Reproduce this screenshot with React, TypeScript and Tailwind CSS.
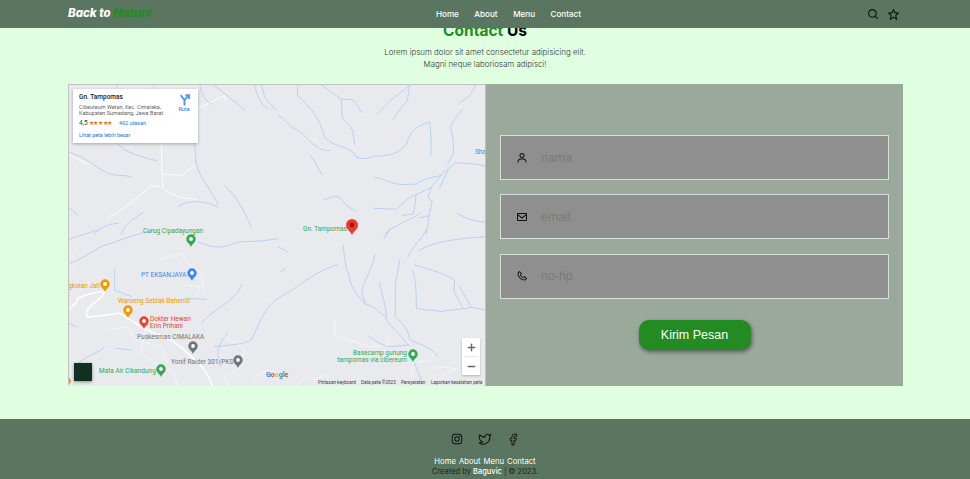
// Contact page with embedded map and message form

import { Plus, Minus, Twitter, Facebook } from 'lucide-react'
import { BiSearch, BiStar, BiUser, BiEnvelope, BiPhone, BiLogoInstagram } from 'react-icons/bi'

const navLinks = ['Home', 'About', 'Menu', 'Contact']

// River and road traces, written in 3x crop coordinates per quadrant
const quadrants = [
  {
    origin: 'translate(0 0) scale(0.3333)',
    thick: 2.5,
    rivers: [
      'M380 180 L385 240 C395 280 430 320 450 360',
      'M470 305 C500 330 530 380 550 430',
      'M560 0 C565 30 575 60 600 75',
      'M580 0 L590 40 L625 80',
      'M395 0 C400 30 410 50 430 60',
      'M440 5 C470 30 500 50 530 80',
      'M330 370 C350 345 420 350 450 370',
      'M0 205 C50 215 80 250 110 262 C130 280 180 270 190 280',
      'M150 180 C170 205 220 220 265 230',
      'M225 385 C190 410 170 420 160 450',
      'M80 450 C100 425 130 420 150 418',
      'M0 368 L30 395',
      'M140 0 L150 12',
      'M250 0 L262 12',
    ],
    roads: [
      'M385 75 L470 35',
      'M280 180 L282 265 L285 310 L250 305 C210 340 150 390 120 400',
      'M285 270 L340 275 L385 240',
      'M285 310 C300 330 340 345 385 345',
      'M0 210 C30 225 50 240 70 240',
      'M470 35 L472 50',
    ],
  },
  {
    origin: 'translate(0 146) scale(0.3333)',
    thick: 4.5,
    rivers: [
      'M0 100 C50 90 80 50 130 40 C180 20 220 10 260 0',
      'M390 35 C430 50 450 60 500 40 C520 30 560 40 630 25',
      'M520 165 C510 210 430 240 400 280',
      'M630 205 C590 230 570 290 550 330 C520 345 480 345 440 350',
      'M480 310 C450 340 440 370 460 410',
      'M140 120 L140 180 L190 200',
      'M0 280 L25 290',
      'M30 400 C70 370 90 370 110 350',
      'M145 355 L190 360',
      'M90 0 C60 10 20 20 0 30',
      'M350 205 L415 208',
    ],
    roads: [
      'M155 250 C190 270 210 290 260 310 C300 320 340 350 370 380 C400 400 420 430 435 470',
      'M110 185 C80 185 50 195 30 205 C25 225 10 230 0 238',
      'M110 185 C105 200 85 215 70 225 C55 240 50 255 60 262 L155 250',
    ],
    thinRoads: [
      'M270 90 L340 70 L360 100 L400 130 L410 190',
      'M350 165 L400 170 L385 190',
      'M230 300 L220 370 L260 400 L320 430 L330 470',
      'M120 300 L180 290 L200 330 L280 350 L300 400',
      'M470 320 L530 360 L510 420 L470 440 L480 470',
      'M560 440 L600 420 L630 440',
      'M5 60 L25 100 L5 130',
    ],
  },
  {
    origin: 'translate(210 0) scale(0.3333)',
    thick: 3,
    rivers: [
      'M60 0 L58 35 C90 60 125 100 140 160 C160 185 200 185 225 205 L240 222',
      'M0 95 C20 100 30 125 50 135 C75 145 85 165 105 180 C125 195 135 200 155 200',
      'M125 0 L190 45 L193 100 C200 115 222 125 225 145 L230 182',
      'M190 45 L222 47 C235 55 245 75 250 85',
      'M395 5 C360 30 330 55 298 90',
      'M395 5 L388 50 C370 70 355 85 347 107',
      'M238 222 C260 226 275 222 290 216 C320 216 360 215 385 180 C395 150 405 130 455 113 L460 165 L458 215',
      'M555 75 C535 100 520 115 518 130 L525 165 L527 210 L510 238',
      'M593 0 C585 30 565 45 545 55',
      'M98 215 C115 235 120 255 133 274',
      'M290 280 C320 285 340 300 375 302 L415 300 C430 290 450 280 490 275',
      'M535 236 C515 250 505 260 495 265 L460 310 C420 330 410 335 395 340 L355 376 L288 373',
      'M535 236 L590 240 L622 246',
      'M510 258 L485 312',
      'M460 310 L450 340 L463 352 L455 385 L445 450',
      'M415 330 C410 360 410 380 405 390 L372 394',
      'M428 385 C425 395 380 410 330 440 L322 450',
      'M426 402 L450 396',
      'M138 347 C155 345 170 330 185 340 C195 355 210 370 235 382',
      'M537 388 C560 400 580 412 622 414',
    ],
    roads: [],
  },
  {
    origin: 'translate(210 146) scale(0.3333)',
    thick: 3,
    rivers: [
      'M195 45 C200 75 200 115 212 130 C215 170 240 200 262 222 C290 230 310 250 325 265 C330 285 365 310 390 345',
      'M290 75 C285 120 250 160 252 190 L262 222',
      'M305 160 C310 190 325 225 325 265',
      'M365 90 C360 130 350 150 352 190 L352 260 C370 280 385 285 395 325 C400 340 450 340 480 380',
      'M403 120 C415 150 415 200 415 235 C430 240 470 240 490 245 C520 238 560 238 580 232 L622 240',
      'M410 105 C440 115 490 125 530 150 L528 185 L555 235',
      'M545 170 C555 190 570 215 580 232',
      'M178 103 C130 120 90 145 50 175 C30 190 10 195 0 205',
      'M0 50 L28 65',
      'M8 125 L22 115',
      'M445 0 C430 30 400 50 390 82',
      'M622 20 C560 25 470 30 423 62',
      'M335 0 L318 25',
      'M272 318 C300 340 320 350 340 350 L395 345',
      'M410 400 L430 450',
    ],
    roads: [],
    thinRoads: [
      'M168 262 L172 318 C200 325 230 335 270 350 L330 345 L330 315',
      'M405 400 L400 450',
      'M460 420 C470 400 530 420 535 415 L490 440 L510 465',
      'M55 465 L85 440 L115 450 L145 430 L150 455',
      'M420 395 L455 395 L470 365',
    ],
  },
]

function Pin({ x, y, color, dot = 'white', large = false }: { x: number; y: number; color: string; dot?: string; large?: boolean }) {
  // Map marker, tip pointing down, centred on the head
  const r = large ? 6 : 4.7
  return (
    <g transform={`translate(${x} ${y})`}>
      <path
        d={`M${-r} 0 A${r} ${r} 0 1 1 ${r} 0 C${r} ${r * 0.8} ${r * 0.3} ${r * 0.9} 0 ${r * 1.7} C${-r * 0.3} ${r * 0.9} ${-r} ${r * 0.8} ${-r} 0 Z`}
        fill={color}
      />
      <circle r={r * 0.4} fill={dot} />
    </g>
  )
}

function MapLabel({ x, y, fill, anchor, children }: { x: number; y: number; fill: string; anchor?: 'end'; children: string }) {
  return (
    <text x={x} y={y} fill={fill} fontSize="6.5" fontFamily="Roboto, sans-serif" textAnchor={anchor}>
      {children}
    </text>
  )
}

function MapEmbed() {
  return (
    <div className="relative h-[302px] w-[418px] shrink-0 overflow-hidden border-t border-r border-l border-[#bfc3c0] bg-[#e8eaed] font-['Roboto',sans-serif]">
      <svg viewBox="0 0 417 302" className="absolute -top-px -left-px h-[302px] w-[417px]" fill="none" strokeLinecap="round" strokeLinejoin="round">
        {quadrants.map((q) => (
          <g key={q.origin} transform={q.origin}>
            {q.thinRoads?.map((d) => <path key={d} d={d} stroke="#ffffff" strokeWidth="1.6" />)}
            {q.roads.map((d) => <path key={d} d={d} stroke="#ffffff" strokeWidth={q.thick} />)}
            {q.rivers.map((d) => <path key={d} d={d} stroke="#b7d1f5" strokeWidth="3" />)}
          </g>
        ))}

        <MapLabel x={75} y={149} fill="#34a853">Curug Cipadayungan</MapLabel>
        <MapLabel x={73} y={193} fill="#4285f4">PT EKSANJAYA</MapLabel>
        <MapLabel x={32} y={204} fill="#f29900" anchor="end">gkolan Jati</MapLabel>
        <MapLabel x={50} y={219} fill="#f29900">Waroeng Seblak Bahenol</MapLabel>
        <MapLabel x={82} y={237} fill="#ea4335">Dokter Hewan</MapLabel>
        <MapLabel x={82} y={244} fill="#ea4335">Erin Prihani</MapLabel>
        <MapLabel x={69} y={255} fill="#70757a">Puskesmas CIMALAKA</MapLabel>
        <MapLabel x={103} y={280} fill="#70757a">Yonif Raider 301/PKS</MapLabel>
        <MapLabel x={31} y={289} fill="#34a853">Mata Air Cikandung</MapLabel>
        <MapLabel x={235} y={147} fill="#34a853">Gn. Tampomas</MapLabel>
        <MapLabel x={407} y={70} fill="#4285f4">Sha</MapLabel>
        <MapLabel x={339} y={271} fill="#34a853" anchor="end">Basecamp gunung</MapLabel>
        <MapLabel x={339} y={278} fill="#34a853" anchor="end">tampomas via cibereum</MapLabel>

        <Pin x={123} y={155} color="#34a853" />
        <Pin x={124} y={189} color="#4285f4" />
        <Pin x={37} y={200} color="#f29900" />
        <Pin x={60} y={226} color="#f29900" />
        <Pin x={76} y={237} color="#ea4335" />
        <Pin x={125} y={262} color="#70757a" />
        <Pin x={170} y={276} color="#70757a" />
        <Pin x={93} y={285} color="#34a853" />
        <Pin x={345} y={270} color="#34a853" />
        <Pin x={284} y={141} color="#ea3b2e" dot="#a31515" large />
        <circle cx={0} cy={297} r={3} fill="#f29900" />

        <text x={198} y={293} fontSize="7" fontWeight="700" fontFamily="Roboto, sans-serif">
          <tspan fill="#4285f4">G</tspan>
          <tspan fill="#ea4335">o</tspan>
          <tspan fill="#fbbc04">o</tspan>
          <tspan fill="#4285f4">g</tspan>
          <tspan fill="#34a853">l</tspan>
          <tspan fill="#ea4335">e</tspan>
        </text>

        <g fontSize="4.6" fill="#3c4043" fontFamily="Roboto, sans-serif">
          <text x={250} y={299.5}>Pintasan keyboard</text>
          <text x={293} y={299.5}>Data peta ©2023</text>
          <text x={333} y={299.5}>Persyaratan</text>
          <text x={363} y={299.5}>Laporkan kesalahan peta</text>
        </g>
      </svg>

      {/* Place card */}
      <div className="absolute top-[4px] left-[4px] h-[54px] w-[125px] bg-white px-[6px] pt-[4px] shadow-[0_1px_3px_rgba(0,0,0,0.3)]">
        <p className="text-[6.5px] leading-[9px] font-medium text-[#202124]">Gn. Tampomas</p>
        <p className="mt-[1.5px] text-[5.5px] leading-[6.6px] text-[#5f6368]">
          Cibeureum Wetan, Kec. Cimalaka,
          <br />
          Kabupaten Sumedang, Jawa Barat
        </p>
        <div className="mt-[2px] flex items-center text-[6.5px] leading-[9px] text-[#3c4043]">
          <span>4,5</span>
          <span className="ml-[1px] text-[5.5px] tracking-[-0.3px] text-[#e7711b]">★★★★★</span>
          <span className="ml-[7px] text-[5.5px] text-[#1a73e8]">462 ulasan</span>
        </div>
        <p className="mt-[4px] text-[5.4px] leading-[7px] text-[#1a73e8]">Lihat peta lebih besar</p>
        <div className="absolute top-[4px] right-[7px] flex w-[14px] flex-col items-center">
          <svg viewBox="0 0 24 24" className="h-[13px] w-[13px]" fill="none" stroke="#5e97ea" strokeWidth="3.6">
            <path d="M12 23 V13 L5 4" />
            <path d="M12 13 L19 5" />
            <path d="M13.5 4 H20.5 V11" />
          </svg>
          <span className="text-[5.5px] leading-[7px] text-[#1a73e8]">Rute</span>
        </div>
      </div>

      {/* Satellite thumbnail */}
      <div className="absolute top-[278px] left-[5px] h-[18px] w-[18px] bg-[#12301f] shadow-[0_1px_3px_rgba(0,0,0,0.4)]" />

      {/* Zoom control */}
      <div className="absolute top-[253px] left-[393px] flex h-[37px] w-[18px] flex-col items-center bg-white shadow-[0_1px_2px_rgba(0,0,0,0.25)]">
        <div className="flex h-[18px] items-center">
          <Plus className="h-[11px] w-[11px] text-[#666666]" strokeWidth={3} />
        </div>
        <div className="h-px w-[14px] bg-[#e6e6e6]" />
        <div className="flex h-[18px] items-center">
          <Minus className="h-[11px] w-[11px] text-[#666666]" strokeWidth={3} />
        </div>
      </div>
    </div>
  )
}

function Field({ icon, placeholder }: { icon: React.ReactNode; placeholder: string }) {
  return (
    <div className="flex h-[45px] w-full items-center border border-[#d9e0da] bg-[#8f8f8f] pl-[15px]">
      <span className="flex w-[25px] shrink-0 text-[12px] text-[#111111]">{icon}</span>
      <input
        placeholder={placeholder}
        className="w-full bg-transparent pt-[1px] font-['Liberation_Sans',sans-serif] text-[12.4px] outline-none placeholder:text-[#7a7a7a]"
      />
    </div>
  )
}

export default function App() {
  return (
    <div className="relative h-[479px] w-[970px] overflow-hidden bg-[#e0ffe0] font-['Inter',sans-serif]">
      <nav className="fixed top-0 left-0 z-10 flex h-[28px] w-full items-center bg-[#5a7660] px-[68px]">
        <a className="w-[368px] text-[11.5px] font-extrabold italic text-white">
          Back to <span className="text-[#228b22]">Nature</span>
        </a>
        <div className="flex gap-[15.5px] text-[8.1px] leading-none font-medium text-white">
          {navLinks.map((link) => (
            <a key={link}>{link}</a>
          ))}
        </div>
        <div className="ml-auto mr-[2px] flex items-center gap-[7px] text-[13px] text-[#111111]">
          <BiSearch />
          <BiStar />
        </div>
      </nav>

      <main className="px-[68px] pt-[21px]">
        <div className="text-center">
          <h1 className="text-[15.5px] leading-[20px] font-bold text-black">
            <span className="text-[#228b22]">Contact</span> Us
          </h1>
          <p className="mt-[5px] text-[7.9px] leading-[12px] font-light text-[#333333]">
            Lorem ipsum dolor sit amet consectetur adipisicing elit.
            <br />
            Magni neque laboriosam adipisci!
          </p>
        </div>

        <section className="mt-[14px] flex w-[835px]">
          <MapEmbed />
          <div className="flex h-[302px] flex-1 flex-col items-center bg-[#9ba89c] px-[14px] pt-[51px]">
            <div className="flex w-full flex-col gap-[14.4px]">
              <Field icon={<BiUser />} placeholder="nama" />
              <Field icon={<BiEnvelope />} placeholder="email" />
              <Field icon={<BiPhone />} placeholder="no-hp" />
            </div>
            <button className="mt-[21px] h-[30px] w-[112px] rounded-[10px] bg-[#228b22] pt-[1px] font-['Liberation_Sans',sans-serif] text-[12.5px] text-white shadow-[1px_2px_4px_rgba(0,0,0,0.45)]">
              Kirim Pesan
            </button>
          </div>
        </section>
      </main>

      <footer className="absolute top-[419px] left-0 flex h-[60px] w-full flex-col items-center bg-[#5a7660] pt-[13px]">
        <div className="flex items-center gap-[14px] text-[14px] text-[#111111]">
          <BiLogoInstagram />
          <Twitter className="h-[14px] w-[14px]" strokeWidth={1.8} />
          <Facebook className="h-[13px] w-[14px]" strokeWidth={1.8} />
        </div>
        <div className="mt-[10px] flex gap-[3px] text-[7.7px] leading-[11px] text-white">
          {navLinks.map((link) => (
            <a key={link}>{link}</a>
          ))}
        </div>
        <p className="text-[7.5px] leading-[10px] text-[#222222]">
          Created by <span className="font-medium text-white">Baguvic</span> | © 2023.
        </p>
      </footer>
    </div>
  )
}
